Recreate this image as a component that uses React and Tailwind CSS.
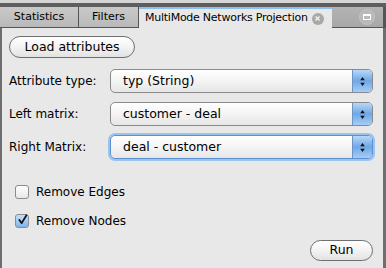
import React from "react";

const font = { fontFamily: '"DejaVu Sans", "Lucida Grande", sans-serif' };

const Arrows = () => (
  <svg width="7" height="11" viewBox="0 0 7 11" className="block">
    <path d="M3.5 1 L5.8 4.2 L1.2 4.2 Z" fill="#111" />
    <path d="M3.5 10 L5.8 6.8 L1.2 6.8 Z" fill="#111" />
  </svg>
);

const Select = ({ value, focused }) => (
  <div
    className={`flex-1 h-[24px] flex items-stretch rounded-[5px] border ${
      focused ? "border-[#5a8fd0] shadow-[0_0_0_2px_#9cc3ec]" : "border-[#8a8a8a]"
    } bg-gradient-to-b from-white via-[#f4f4f4] to-[#e6e6e6] overflow-hidden`}
  >
    <div className="flex-1 flex items-center pl-[12px] text-[12.5px] text-black">{value}</div>
    <div className="w-[20px] flex items-center justify-center bg-gradient-to-b from-[#b9d7f7] via-[#6ea7e6] to-[#a6cdf5] border-l border-[#6c94c4]">
      <Arrows />
    </div>
  </div>
);

const Pill = ({ children, className }) => (
  <div
    className={`flex items-center justify-center rounded-full border border-[#6f6f6f] bg-gradient-to-b from-white via-[#f3f3f3] to-[#e2e2e2] text-[12.5px] text-black ${className}`}
  >
    {children}
  </div>
);

const Row = ({ label, value, focused }) => (
  <div className="flex items-center h-[24px]">
    <div className="w-[101px] text-[12px] text-black">{label}</div>
    <Select value={value} focused={focused} />
  </div>
);

const Check = ({ checked, label }) => (
  <div className="flex items-center h-[16px]">
    <div
      className={`w-[14px] h-[14px] rounded-[3px] border border-[#8c8c8c] flex items-center justify-center ${
        checked ? "bg-gradient-to-b from-[#c6e0fa] to-[#7fb3ea] border-[#6c94c4]" : "bg-gradient-to-b from-white to-[#e8e8e8]"
      }`}
    >
      {checked && (
        <svg width="14" height="14" viewBox="0 0 14 14" className="-mt-[3px] ml-[1px]">
          <path d="M3 7 L6 11 L12 1" stroke="#111" strokeWidth="2.2" fill="none" strokeLinecap="round" strokeLinejoin="round" />
        </svg>
      )}
    </div>
    <span className="ml-[7px] text-[12px] text-black">{label}</span>
  </div>
);

export default function App() {
  return (
    <div className="w-[386px] h-[268px] bg-[#e8e8e8] flex flex-col overflow-hidden" style={font}>
      {/* top strip */}
      <div className="h-[3px] bg-[#d6d6d6]" />
      <div className="h-[4px] bg-[#5e5e5e]" />
      {/* tabs */}
      <div className="h-[21px] flex bg-[#5e5e5e] text-[11px] text-black whitespace-nowrap">
        <div className="w-[79px] flex items-center justify-center bg-gradient-to-b from-[#c9c9c9] to-[#b9b9b9] border-r border-b border-[#555]">
          Statistics
        </div>
        <div className="w-[60px] flex items-center justify-center bg-gradient-to-b from-[#c9c9c9] to-[#b9b9b9] border-r border-b border-[#555]">
          Filters
        </div>
        <div className="w-[193px] flex items-center pl-[6px] bg-[#e8e8e8] border-t-2 border-[#8fbfee]">
          <span className="tracking-[-0.25px]">MultiMode Networks Projection</span>
          <span className="ml-[4px] w-[12px] h-[12px] rounded-full bg-[#a8a8a8] flex items-center justify-center">
            <svg width="7" height="7" viewBox="0 0 7 7">
              <path d="M1.5 1.5 L5.5 5.5 M5.5 1.5 L1.5 5.5" stroke="#f0f0f0" strokeWidth="1.4" />
            </svg>
          </span>
        </div>
        <div className="flex-1 flex items-center justify-end pr-[8px] bg-gradient-to-b from-[#b3b3b3] to-[#a8a8a8] border-b border-[#555] border-r-[3px]">
          <span className="w-[16px] h-[16px] rounded-full bg-[#b9b9b9] border border-[#c4c4c4] flex items-center justify-center">
            <span className="w-[8px] h-[6px] border border-white border-t-2" />
          </span>
        </div>
      </div>
      {/* content */}
      <div className="flex-1 flex flex-col border-l-2 border-r-[3px] border-[#6e6e6e] pl-[7px] pr-[10px]">
        <Pill className="mt-[8px] w-[126px] h-[22px]">Load attributes</Pill>
        <div className="mt-[11px] flex flex-col gap-[9px]">
          <Row label="Attribute type:" value="typ (String)" />
          <Row label="Left matrix:" value="customer - deal" />
          <Row label="Right Matrix:" value="deal - customer" focused />
        </div>
        <div className="mt-[25px] pl-[6px] flex flex-col gap-[13px]">
          <Check label="Remove Edges" />
          <Check checked label="Remove Nodes" />
        </div>
        <div className="mt-[11px] flex justify-end">
          <Pill className="w-[63px] h-[21px]">Run</Pill>
        </div>
      </div>
    </div>
  );
}
